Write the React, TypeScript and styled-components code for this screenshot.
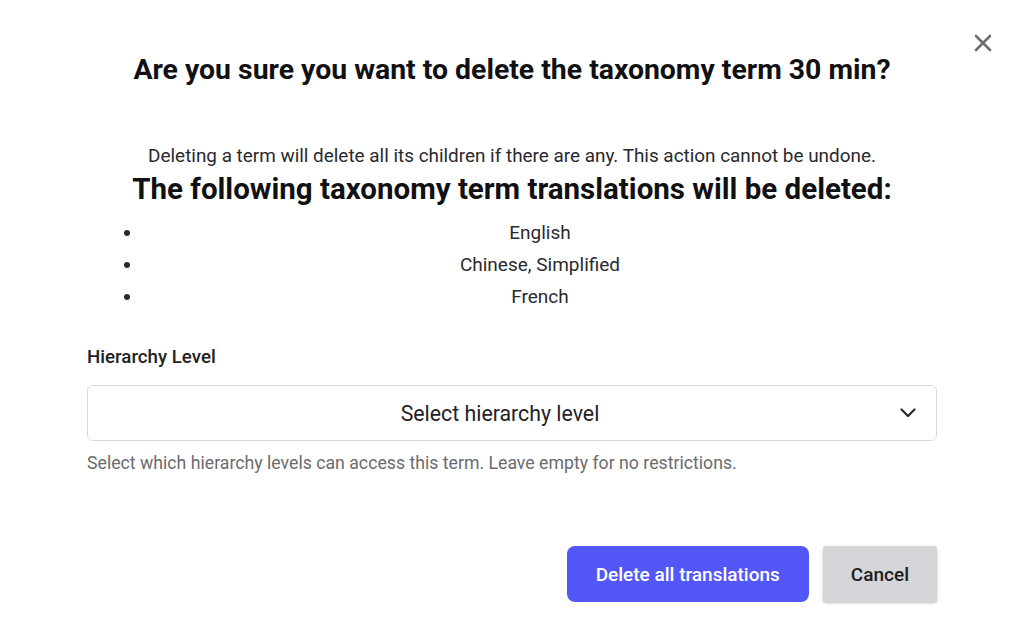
import styled, { createGlobalStyle } from "styled-components";

const Global = createGlobalStyle`
  html, body {
    margin: 0;
    padding: 0;
    background: #ffffff;
    font-family: Roboto, "Liberation Sans", sans-serif;
    color: #1f1f23;
  }
`;

const Modal = styled.div`
  position: relative;
  width: 1024px;
  height: 630px;
  box-sizing: border-box;
  padding: 50px 87px 0;
  background: #fff;
`;

const CloseBtn = styled.button`
  position: absolute;
  top: 31px;
  right: 29px;
  width: 24px;
  height: 24px;
  padding: 0;
  border: none;
  background: none;
  display: flex;
  align-items: center;
  justify-content: center;
  cursor: pointer;
`;

const Title = styled.h2`
  margin: 0;
  text-align: center;
  font-size: 28.4px;
  font-weight: 700;
  line-height: 40px;
  color: #111114;
`;

const Body = styled.div`
  margin-top: 54px;
  text-align: center;
`;

const Note = styled.p`
  margin: 0;
  font-size: 18.9px;
  line-height: 24px;
  color: #2a2a2e;
`;

const SubTitle = styled.h3`
  margin: 4px 0 0;
  font-size: 29.5px;
  font-weight: 700;
  line-height: 34px;
  color: #111114;
`;

const LangList = styled.ul`
  margin: 11px 0 0;
  padding-left: 56px;
`;

const LangItem = styled.li`
  font-size: 19px;
  line-height: 32px;
  color: #2a2a2e;
`;

const Field = styled.div`
  margin-top: 32px;
`;

const Label = styled.label`
  display: block;
  font-size: 18.7px;
  font-weight: 500;
  line-height: 24px;
  color: #222226;
`;

const SelectBox = styled.div`
  margin-top: 16px;
  height: 56px;
  box-sizing: border-box;
  border: 1px solid #d9d9dd;
  border-radius: 6px;
  display: flex;
  align-items: center;
  padding: 0 20px 0 12px;
`;

const SelectText = styled.span`
  flex: 1;
  text-align: center;
  font-size: 21.3px;
  color: #222226;
`;

const Help = styled.p`
  margin: 11px 0 0;
  font-size: 17.7px;
  line-height: 22px;
  color: #6b6b70;
`;

const Actions = styled.div`
  margin-top: 72px;
  display: flex;
  justify-content: flex-end;
  gap: 14px;
`;

const Button = styled.button<{ $variant: "primary" | "secondary" }>`
  height: 56px;
  border: none;
  font-family: inherit;
  font-size: 19px;
  font-weight: 500;
  cursor: pointer;
  ${(p) =>
    p.$variant === "primary"
      ? `
    padding: 0 29px;
    background: #5457f7;
    color: #fff;
    border-radius: 8px;
  `
      : `
    padding: 0 28px;
    background: #d5d6da;
    color: #1c1c20;
    border-radius: 3px;
    box-shadow: 0 1px 3px rgba(0,0,0,0.25);
  `}
`;

const langs = ["English", "Chinese, Simplified", "French"];

export default function App() {
  return (
    <>
      <Global />
      <Modal>
        <CloseBtn aria-label="Close">
          <svg width="18" height="18" viewBox="0 0 18 18">
            <path d="M2 2L16 16M16 2L2 16" stroke="#6e6e72" strokeWidth="2.6" strokeLinecap="round" />
          </svg>
        </CloseBtn>
        <Title>Are you sure you want to delete the taxonomy term 30 min?</Title>
        <Body>
          <Note>Deleting a term will delete all its children if there are any. This action cannot be undone.</Note>
          <SubTitle>The following taxonomy term translations will be deleted:</SubTitle>
          <LangList>
            {langs.map((l) => (
              <LangItem key={l}>{l}</LangItem>
            ))}
          </LangList>
        </Body>
        <Field>
          <Label>Hierarchy Level</Label>
          <SelectBox>
            <SelectText>Select hierarchy level</SelectText>
            <svg width="16" height="10" viewBox="0 0 16 10" fill="none">
              <path d="M1.5 1.5L8 8L14.5 1.5" stroke="#2a2a2e" strokeWidth="2.2" strokeLinecap="round" strokeLinejoin="round" />
            </svg>
          </SelectBox>
          <Help>Select which hierarchy levels can access this term. Leave empty for no restrictions.</Help>
        </Field>
        <Actions>
          <Button $variant="primary">Delete all translations</Button>
          <Button $variant="secondary">Cancel</Button>
        </Actions>
      </Modal>
    </>
  );
}
